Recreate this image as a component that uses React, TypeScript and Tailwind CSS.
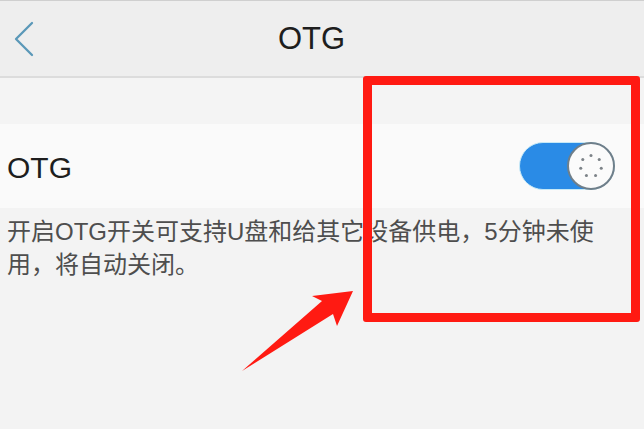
import React from "react";

export default function App() {
  const dots = Array.from({ length: 7 }, (_, i) => {
    const a = (i / 7) * Math.PI * 2 - Math.PI / 2;
    return { cx: 23 + Math.cos(a) * 11, cy: 23 + Math.sin(a) * 11 };
  });
  return (
    <div
      className="relative w-[644px] h-[429px] overflow-hidden bg-[#f3f3f3]"
      style={{ fontFamily: '"Liberation Sans", "Noto Sans CJK SC", sans-serif' }}
    >
      <div className="flex h-[78px] items-center border-t border-b-2 border-t-[#cfcfcf] border-b-[#dcdcdc] bg-[#eeeeee]">
        <svg className="ml-[13px] h-[36px] w-[22px]" viewBox="0 0 22 36">
          <polyline
            points="19,2 3,18 19,34"
            fill="none"
            stroke="#5a98b8"
            strokeWidth="2.3"
            strokeLinecap="round"
            strokeLinejoin="round"
          />
        </svg>
        <div className="mr-[56px] flex-1 text-center text-[31px] leading-none text-[#1e1e1e]">OTG</div>
      </div>
      <div className="h-[46px] bg-[#f4f4f4]" />
      <div className="flex h-[84px] items-center justify-between bg-[#fafafa] pl-[7px] pr-[29px]">
        <span className="pt-[3px] text-[30px] leading-none text-[#1e1e1e]">OTG</span>
        <div className="relative h-[48px] w-[96px] rounded-full border border-[#c6e9f7] bg-[#2a8be6]">
          <div className="absolute right-[-1px] top-[-1px] h-[48px] w-[48px] rounded-full border-2 border-[#6f7f8a] bg-[#fbfbfb]">
            <svg className="h-full w-full" viewBox="0 0 46 46">
              {dots.map((d, i) => (
                <circle key={i} cx={d.cx} cy={d.cy} r="1.6" fill="#7d8388" />
              ))}
            </svg>
          </div>
        </div>
      </div>
      <div className="whitespace-nowrap px-[7px] pt-[7px] text-[24px] leading-[33px] text-[#4e4e4e]">
        开启OTG开关可支持U盘和给其它设备供电，5分钟未使
        <br />
        用，将自动关闭。
      </div>

      <div className="absolute left-[363px] top-[76px] h-[246px] w-[277px] rounded-[3px] border-[9px] border-[#ff1a12]" />
      <svg className="pointer-events-none absolute left-0 top-0 h-[429px] w-[644px]" viewBox="0 0 644 429">
        <polygon points="242,371 322,301 312,296 353,291 337,326 333,314" fill="#ff1a12" />
      </svg>
    </div>
  );
}
